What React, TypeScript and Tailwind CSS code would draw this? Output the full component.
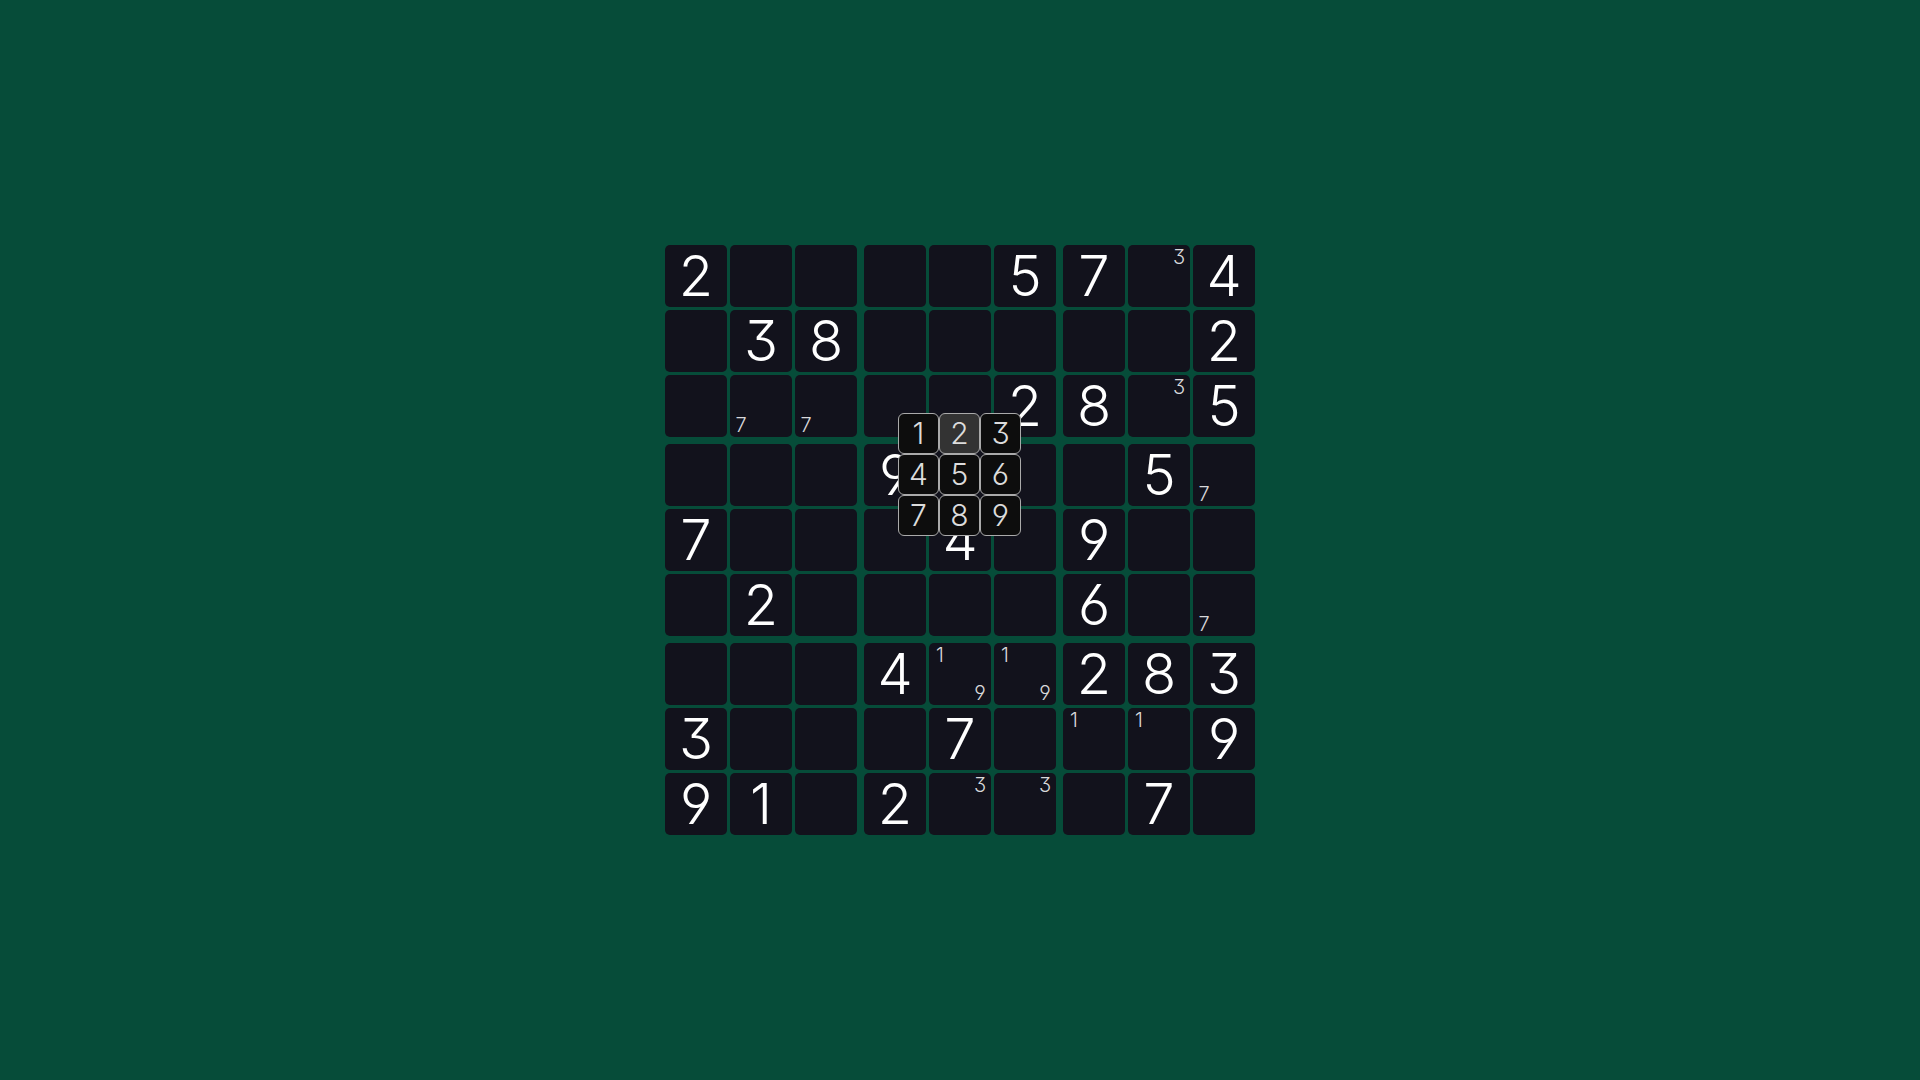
type Cell = {
  value?: number
  notes?: number[]
}

const DIGITS = [1, 2, 3, 4, 5, 6, 7, 8, 9]

const BOARD = [
  '200005704',
  '038000002',
  '000002805',
  '000900050',
  '700040900',
  '020000600',
  '000400283',
  '300070009',
  '910200070',
]

// keyed by "row-col"
const NOTES: Record<string, number[]> = {
  '0-7': [3],
  '2-1': [7],
  '2-2': [7],
  '2-7': [3],
  '3-8': [7],
  '5-8': [7],
  '6-4': [1, 9],
  '6-5': [1, 9],
  '7-6': [1],
  '7-7': [1],
  '8-4': [3],
  '8-5': [3],
}

function getCell(row: number, col: number): Cell {
  const value = Number(BOARD[row][col])
  return value ? { value } : { notes: NOTES[`${row}-${col}`] }
}

function Notes({ notes }: { notes: number[] }) {
  return (
    <span className="grid h-full w-full grid-cols-3 grid-rows-3 px-px py-0.5 text-xl leading-5 text-[#d8d8da]">
      {DIGITS.map((digit) => (
        <span key={digit} className="flex items-center justify-center">
          {notes.includes(digit) ? digit : null}
        </span>
      ))}
    </span>
  )
}

function BoardCell({ row, col }: { row: number; col: number }) {
  const { value, notes } = getCell(row, col)

  return (
    <button
      type="button"
      aria-label={`Row ${row + 1}, column ${col + 1}`}
      className="flex size-[62px] items-center justify-center rounded-[5px] bg-[#12121c] text-[56px] leading-[62px] text-white"
    >
      {value}
      {notes && <Notes notes={notes} />}
    </button>
  )
}

function Block({ index }: { index: number }) {
  const startRow = Math.floor(index / 3) * 3
  const startCol = (index % 3) * 3

  return (
    <div className="grid grid-cols-3 gap-[3px]">
      {DIGITS.map((_, i) => (
        <BoardCell
          key={i}
          row={startRow + Math.floor(i / 3)}
          col={startCol + (i % 3)}
        />
      ))}
    </div>
  )
}

function NumberPicker({ active }: { active: number }) {
  return (
    <div className="absolute top-[168px] left-[233px] grid grid-cols-3">
      {DIGITS.map((digit) => (
        <button
          key={digit}
          type="button"
          className={`size-[41px] rounded-md border border-[#aaaaaa] text-3xl leading-[39px] text-[#dcdcdc] ${
            digit === active ? 'bg-[#333333]' : 'bg-[#0d0d0d]'
          }`}
        >
          {digit}
        </button>
      ))}
    </div>
  )
}

export default function App() {
  return (
    <main className="flex min-h-screen items-center justify-center bg-[#064c39] font-['Inter',sans-serif] font-light [font-feature-settings:'cv03','cv04','cv09']">
      <div className="relative grid grid-cols-3 gap-[7px]">
        {DIGITS.map((_, i) => (
          <Block key={i} index={i} />
        ))}
        <NumberPicker active={2} />
      </div>
    </main>
  )
}
